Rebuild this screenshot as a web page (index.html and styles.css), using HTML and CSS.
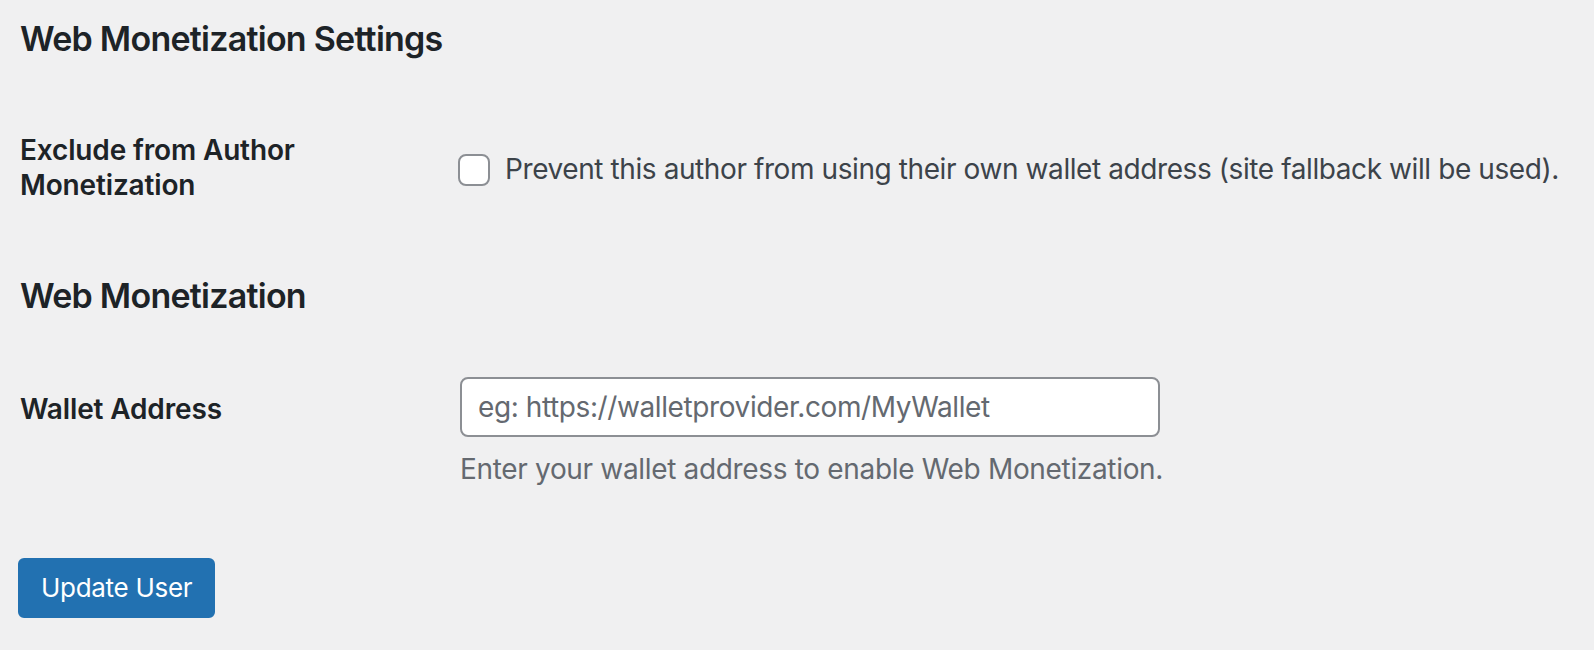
FILE: index.html
```html
<!DOCTYPE html>
<html lang="en">
<head>
<meta charset="utf-8">
<title>Web Monetization Settings</title>
<link rel="stylesheet" href="styles.css">
</head>
<body>
<div class="wrap">
  <h2 class="section-title first">Web Monetization Settings</h2>
  <div class="form-row row-exclude">
    <div class="row-label">Exclude from Author<br>Monetization</div>
    <div class="row-field">
      <label class="check-label">
        <span class="checkbox"></span>
        <span class="check-text">Prevent this author from using their own wallet address (site fallback will be used).</span>
      </label>
    </div>
  </div>
  <h2 class="section-title second">Web Monetization</h2>
  <div class="form-row row-wallet">
    <div class="row-label wallet-label">Wallet Address</div>
    <div class="row-field">
      <input class="text-input" type="text" placeholder="eg: https://walletprovider.com/MyWallet">
      <p class="description">Enter your wallet address to enable Web Monetization.</p>
    </div>
  </div>
  <div class="submit">
    <button class="button-primary" type="button">Update User</button>
  </div>
</div>
</body>
</html>
```

FILE: styles.css
```css
html, body {
  margin: 0;
  padding: 0;
  background: #f0f0f1;
}
body {
  font-family: Inter, "Noto Sans", "Liberation Sans", sans-serif;
  color: #3c434a;
  width: 1594px;
  height: 650px;
  overflow: hidden;
}
.wrap {
  padding: 0 20px;
}
.section-title {
  font-size: 34px;
  font-weight: 600;
  line-height: 44px;
  letter-spacing: -0.75px;
  color: #1d2327;
  margin: 0;
}
.section-title.first {
  padding-top: 17px;
}
.section-title.second {
  padding-top: 71px;
}
.form-row {
  display: flex;
}
.row-exclude {
  align-items: center;
  padding-top: 72px;
}
.row-wallet {
  align-items: flex-start;
  padding-top: 59px;
}
.row-label {
  width: 440px;
  flex: none;
  font-size: 28px;
  font-weight: 600;
  line-height: 35px;
  letter-spacing: -0.15px;
  color: #1d2327;
}
.wallet-label {
  padding-top: 15px;
}
.row-field {
  flex: none;
}
.check-label {
  display: flex;
  align-items: center;
  gap: 15px;
  padding-top: 3px;
}
.checkbox {
  width: 28px;
  height: 28px;
  border: 2px solid #8c8f94;
  border-radius: 8px;
  background: #fff;
  margin-left: -2px;
  flex: none;
}
.check-text {
  font-size: 28px;
  line-height: 35px;
  letter-spacing: -0.41px;
  color: #3c434a;
}
.text-input {
  display: block;
  box-sizing: border-box;
  width: 700px;
  height: 60px;
  margin: 0;
  padding: 0 16px;
  border: 2px solid #8c8f94;
  border-radius: 8px;
  background: #fff;
  font-family: inherit;
  font-size: 28px;
  letter-spacing: -0.4px;
  color: #2c3338;
  outline: none;
}
.text-input::placeholder {
  color: #646970;
  opacity: 1;
}
.description {
  margin: 15px 0 0;
  font-size: 28px;
  line-height: 35px;
  letter-spacing: -0.33px;
  color: #646970;
}
.submit {
  padding-top: 71px;
}
.button-primary {
  box-sizing: border-box;
  height: 60px;
  padding: 0 21px;
  margin: 0 0 0 -2px;
  border: 2px solid #2271b1;
  border-radius: 6px;
  background: #2271b1;
  color: #fff;
  font-family: inherit;
  font-size: 26px;
  line-height: 56px;
  letter-spacing: -0.3px;
  cursor: pointer;
}
```
